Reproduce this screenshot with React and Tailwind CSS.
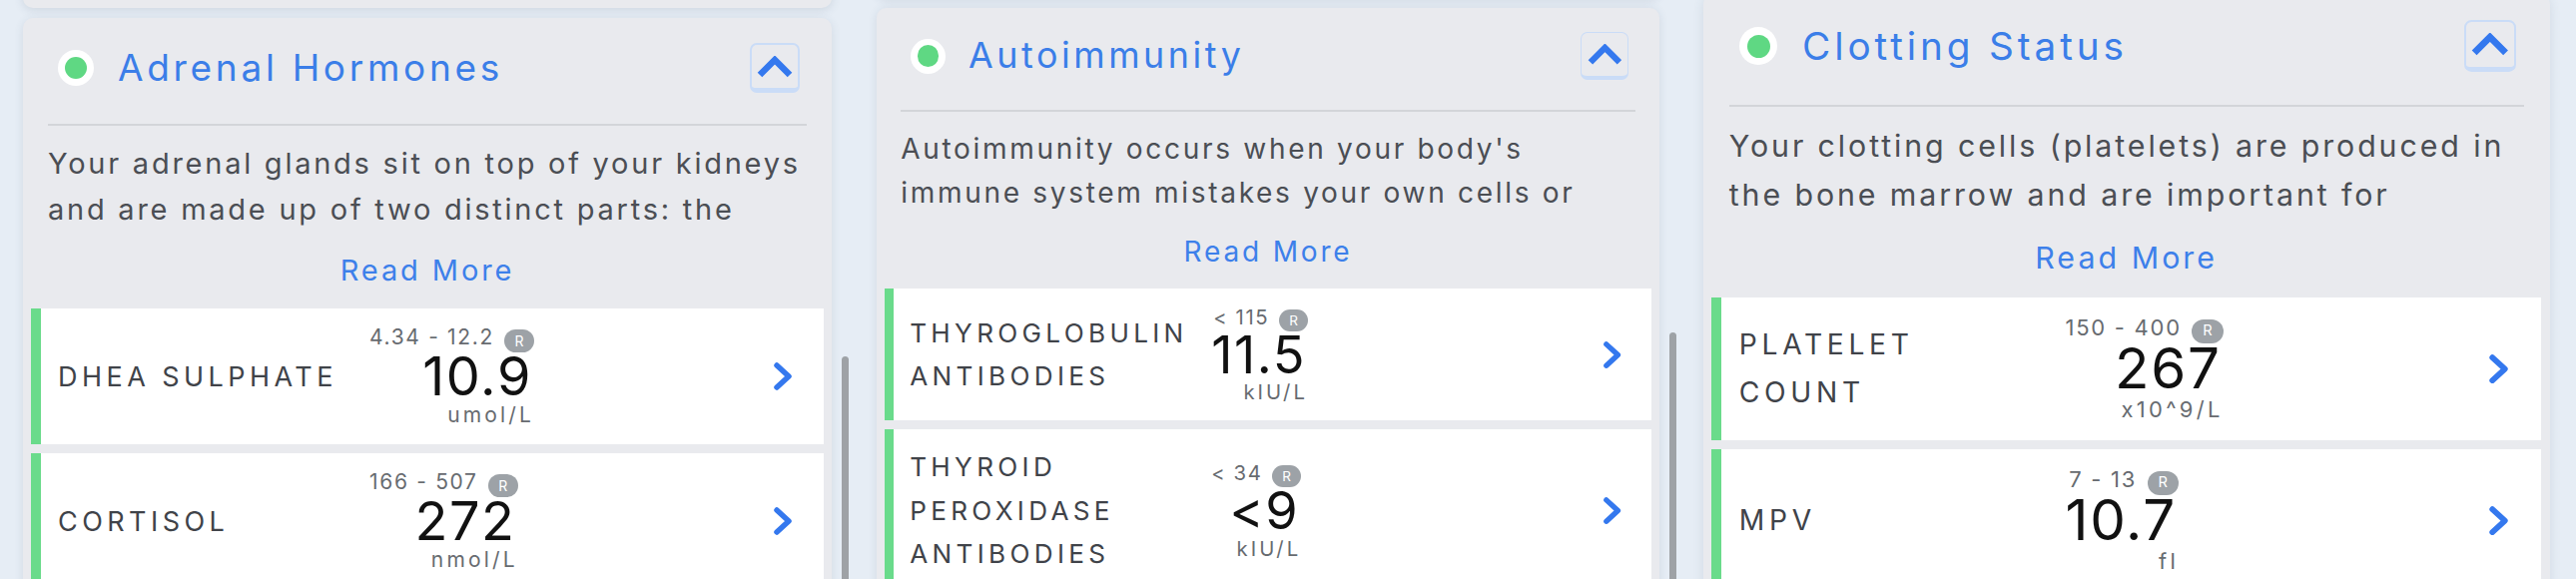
const COLUMNS = [
  {
    zoom: '',
    offset: '-mt-[32px]',
    scrollTop: 'mt-[357px]',
    title: 'Adrenal Hormones',
    lines: ['Your adrenal glands sit on top of your kidneys', 'and are made up of two distinct parts: the'],
    rows: [
      { name: ['DHEA SULPHATE'], range: '4.34 - 12.2', value: '10.9', unit: 'umol/L' },
      { name: ['CORTISOL'], range: '166 - 507', value: '272', unit: 'nmol/L' },
    ],
  },
  {
    zoom: '[zoom:0.968]',
    offset: '-mt-[42px]',
    scrollTop: 'mt-[344px]',
    title: 'Autoimmunity',
    lines: ["Autoimmunity occurs when your body's", 'immune system mistakes your own cells or'],
    rows: [
      { name: ['THYROGLOBULIN', 'ANTIBODIES'], range: '< 115', value: '11.5', unit: 'kIU/L' },
      { name: ['THYROID', 'PEROXIDASE', 'ANTIBODIES'], range: '< 34', value: '<9', unit: 'kIU/L' },
    ],
  },
  {
    zoom: '[zoom:1.047]',
    offset: '-mt-[56px]',
    scrollTop: 'mt-[700px]',
    title: 'Clotting Status',
    lines: ['Your clotting cells (platelets) are produced in', 'the bone marrow and are important for'],
    rows: [
      { name: ['PLATELET', 'COUNT'], range: '150 - 400', value: '267', unit: 'x10^9/L' },
      { name: ['MPV'], range: '7 - 13', value: '10.7', unit: 'fl' },
    ],
  },
]

function ChevronUp() {
  return (
    <svg width="36" height="22" viewBox="0 0 36 22">
      <polyline points="3,19 18,4 33,19" fill="none" stroke="#3478ee" strokeWidth="6.5" strokeLinejoin="miter" />
    </svg>
  )
}

function ChevronRight() {
  return (
    <svg width="22" height="28" viewBox="0 0 22 28">
      <polyline points="5,3 17,14 5,25" fill="none" stroke="#3478ee" strokeWidth="5.5" strokeLinejoin="round" strokeLinecap="round" />
    </svg>
  )
}

function ResultRow({ row }) {
  return (
    <div className="flex min-h-[130px] items-center border-l-[10px] border-[#6adb8b] bg-white py-[17px] pl-[17px] pr-[30px]">
      <div className="w-[312px] shrink-0 text-[27px] leading-[45px] tracking-[0.165em] text-[#404349]">
        {row.name.map((line) => (
          <div key={line} className="whitespace-nowrap">{line}</div>
        ))}
      </div>
      <div className="flex flex-col items-end">
        <div className="flex items-end gap-[10px]">
          <span className="text-[21px] leading-[24px] tracking-[0.08em] text-[#676b70]">{row.range}</span>
          <span className="mb-[-3px] flex h-[23px] w-[30px] items-center justify-center rounded-full bg-[#9da2a7] text-[14px] text-white">
            R
          </span>
        </div>
        <div className="pr-[2px] text-[54px] leading-[54px] tracking-[0.03em] text-[#111]">{row.value}</div>
        <div className="text-[21px] leading-[24px] tracking-[0.15em] text-[#676b70]">{row.unit}</div>
      </div>
      <div className="flex-1" />
      <ChevronRight />
    </div>
  )
}

function Panel({ col }) {
  return (
    <div className="rounded-[10px] bg-[#e9eaee] px-[8px] pb-[10px] shadow-[0_2px_10px_rgba(60,80,110,0.12)]">
      <div className="px-[17px]">
        <div className="mt-[25px] flex h-[50px] items-center pl-[10px] pr-[7px]">
          <div className="flex h-[36px] w-[36px] items-center justify-center rounded-full bg-white">
            <div className="h-[22px] w-[22px] rounded-full bg-[#5fd883]" />
          </div>
          <div className="ml-[24px] text-[37px] tracking-[0.1em] text-[#3b7ee8]">{col.title}</div>
          <div className="flex-1" />
          <div className="flex h-[50px] w-[50px] items-center justify-center rounded-[7px] border-2 border-b-[5px] border-[#cadcf7]">
            <ChevronUp />
          </div>
        </div>
        <div className="mt-[31px] h-[2px] bg-[#d3d5d9]" />
        <div className="mt-[15px] text-[29px] leading-[46px] tracking-[0.095em] text-[#4b4e54]">
          {col.lines.map((line) => (
            <div key={line} className="whitespace-nowrap">{line}</div>
          ))}
        </div>
        <div className="mt-[18px] text-center text-[29px] leading-[40px] tracking-[0.1em] text-[#3d80ea]">Read More</div>
      </div>
      <div className="mt-[18px] flex flex-col gap-[9px]">
        {col.rows.map((row) => (
          <ResultRow key={row.value} row={row} />
        ))}
      </div>
    </div>
  )
}

export default function App() {
  return (
    <div className="flex h-[580px] w-[2580px] overflow-hidden bg-[#e6edf5] pl-[23px] [font-family:Inter,sans-serif]">
      {COLUMNS.map((col) => (
        <div key={col.title} className={`flex shrink-0 items-start ${col.zoom}`}>
          <div className={`flex w-[810px] flex-col gap-[10px] ${col.offset}`}>
            <div className="h-[40px] rounded-[10px] bg-[#e9eaee] shadow-[0_2px_10px_rgba(60,80,110,0.15)]" />
            <Panel col={col} />
          </div>
          <div className="w-[45px] pl-[10px]">
            <div className={`h-[400px] w-[7px] rounded-full bg-[#9ea2a6] ${col.scrollTop}`} />
          </div>
        </div>
      ))}
    </div>
  )
}
